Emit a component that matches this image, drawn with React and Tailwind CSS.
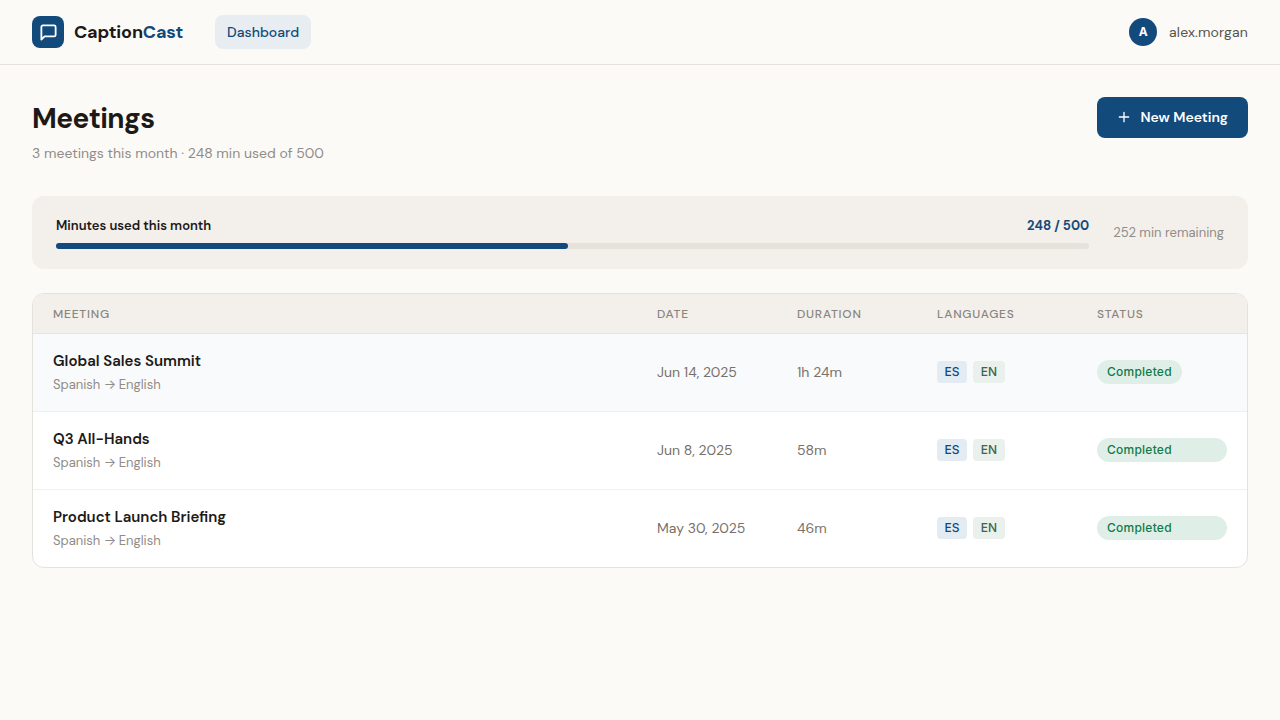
import React from "react";

const rows = [
  { name: "Global Sales Summit", date: "Jun 14, 2025", dur: "1h 24m", hover: true },
  { name: "Q3 All-Hands", date: "Jun 8, 2025", dur: "58m" },
  { name: "Product Launch Briefing", date: "May 30, 2025", dur: "46m" },
];
const dm = "font-['DM_Sans','Inter',sans-serif]";
const grid = "grid grid-cols-[604px_140px_140px_160px_1fr]";

export default function App() {
  return (
    <div className={`min-h-[720px] bg-[#fcfaf7] ${dm} text-[#1c1917]`}>
      <header className="h-[65px] border-b border-[#e5e2dd] flex items-center justify-between px-8">
        <div className="flex items-center">
          <div className="w-8 h-8 rounded-lg bg-[#134a7c] flex items-center justify-center">
            <svg width="19" height="19" viewBox="0 0 24 24" fill="none" stroke="#fff" strokeWidth="2.3" strokeLinecap="round" strokeLinejoin="round">
              <path d="M21 15a2 2 0 0 1-2 2H7l-4 4V5a2 2 0 0 1 2-2h14a2 2 0 0 1 2 2z" />
            </svg>
          </div>
          <div className="ml-2.5 text-[18px] leading-7 font-bold tracking-[-0.01em]">
            Caption<span className="text-[#134a7c]">Cast</span>
          </div>
          <div className="ml-8 h-[34px] px-3 rounded-lg bg-[#e8edf2] text-[#134a7c] text-sm font-medium flex items-center">
            Dashboard
          </div>
        </div>
        <div className="flex items-center gap-3">
          <div className="w-7 h-7 rounded-full bg-[#134a7c] text-white text-xs font-bold flex items-center justify-center font-['Inter',sans-serif]">A</div>
          <div className="text-sm tracking-[0.01em] text-[#57534e]">alex.morgan</div>
        </div>
      </header>

      <main className="px-8 pt-8">
        <div className="flex items-start justify-between">
          <div>
            <h1 className="text-[28px] leading-[44px] font-bold tracking-[-0.02em]">Meetings</h1>
            <p className="mt-0.5 text-sm leading-[21px] text-[#918c87]">3 meetings this month · 248 min used of 500</p>
          </div>
          <button className="h-[41px] w-[151.5px] pb-px rounded-lg bg-[#134a7c] text-white text-sm font-semibold flex items-center justify-center gap-2">
            <svg width="16" height="16" viewBox="0 0 24 24" fill="none" stroke="#fff" strokeWidth="2" strokeLinecap="round">
              <path d="M5 12h14M12 5v14" />
            </svg>
            New Meeting
          </button>
        </div>

        <section className="mt-8 h-[73px] rounded-xl bg-[#f3f0eb] px-6 flex items-center gap-6">
          <div className="flex-1">
            <div className="flex items-center justify-between text-[13px] leading-5 font-semibold">
              <span>Minutes used this month</span>
              <span className="text-[#134a7c] font-bold">248 / 500</span>
            </div>
            <div className="mt-[7px] h-1.5 rounded-full bg-[#e7e1dc]">
              <div className="h-full rounded-full bg-[#134a7c]" style={{ width: "49.6%" }} />
            </div>
          </div>
          <div className="text-[13px] text-[#918c87]">252 min remaining</div>
        </section>

        <section className="mt-6 rounded-xl border border-[#e5e2dd] bg-white overflow-hidden">
          <div className={`${grid} h-10 bg-[#f3f0eb] border-b border-[#e8e5e0] items-center text-xs font-medium tracking-[0.065em] text-[#8a8580]`}>
            <div className="px-5">MEETING</div>
            <div className="px-5">DATE</div>
            <div className="px-5">DURATION</div>
            <div className="px-5">LANGUAGES</div>
            <div className="px-5">STATUS</div>
          </div>
          {rows.map((r, i) => (
            <div key={r.name} className={`${grid} items-center pb-px ${i < 2 ? "h-[78px] border-b border-[#f3f0eb]" : "h-[77px]"} ${r.hover ? "bg-[#f8fafb]" : ""}`}>
              <div className="px-5 pt-px">
                <div className="text-[15px] leading-[22px] font-semibold">{r.name}</div>
                <div className="mt-0.5 text-[13px] leading-5 text-[#918c87]">
                  Spanish <span className="font-['Inter',sans-serif] tracking-[-1px]">→</span> English
                </div>
              </div>
              <div className="px-5 text-sm text-[#78716c]">{r.date}</div>
              <div className="px-5 text-sm text-[#78716c]">{r.dur}</div>
              <div className="px-5 flex gap-1.5">
                <span className="h-[22px] w-[30px] justify-center rounded bg-[#e3ebf3] text-[#134a7c] text-xs font-medium font-['Inter',sans-serif] flex items-center">ES</span>
                <span className="h-[22px] w-[32px] justify-center rounded bg-[#eaf0ec] text-[#3d6650] text-xs font-medium font-['Inter',sans-serif] flex items-center">EN</span>
              </div>
              <div className="px-5 flex">
                <span className={`h-6 px-2.5 rounded-full bg-[#dfefe7] text-[#0f7a4a] text-xs font-medium tracking-[0.02em] font-['Inter',sans-serif] flex items-center ${i === 0 ? "" : "w-[130px]"}`}>Completed</span>
              </div>
            </div>
          ))}
        </section>
      </main>
    </div>
  );
}
